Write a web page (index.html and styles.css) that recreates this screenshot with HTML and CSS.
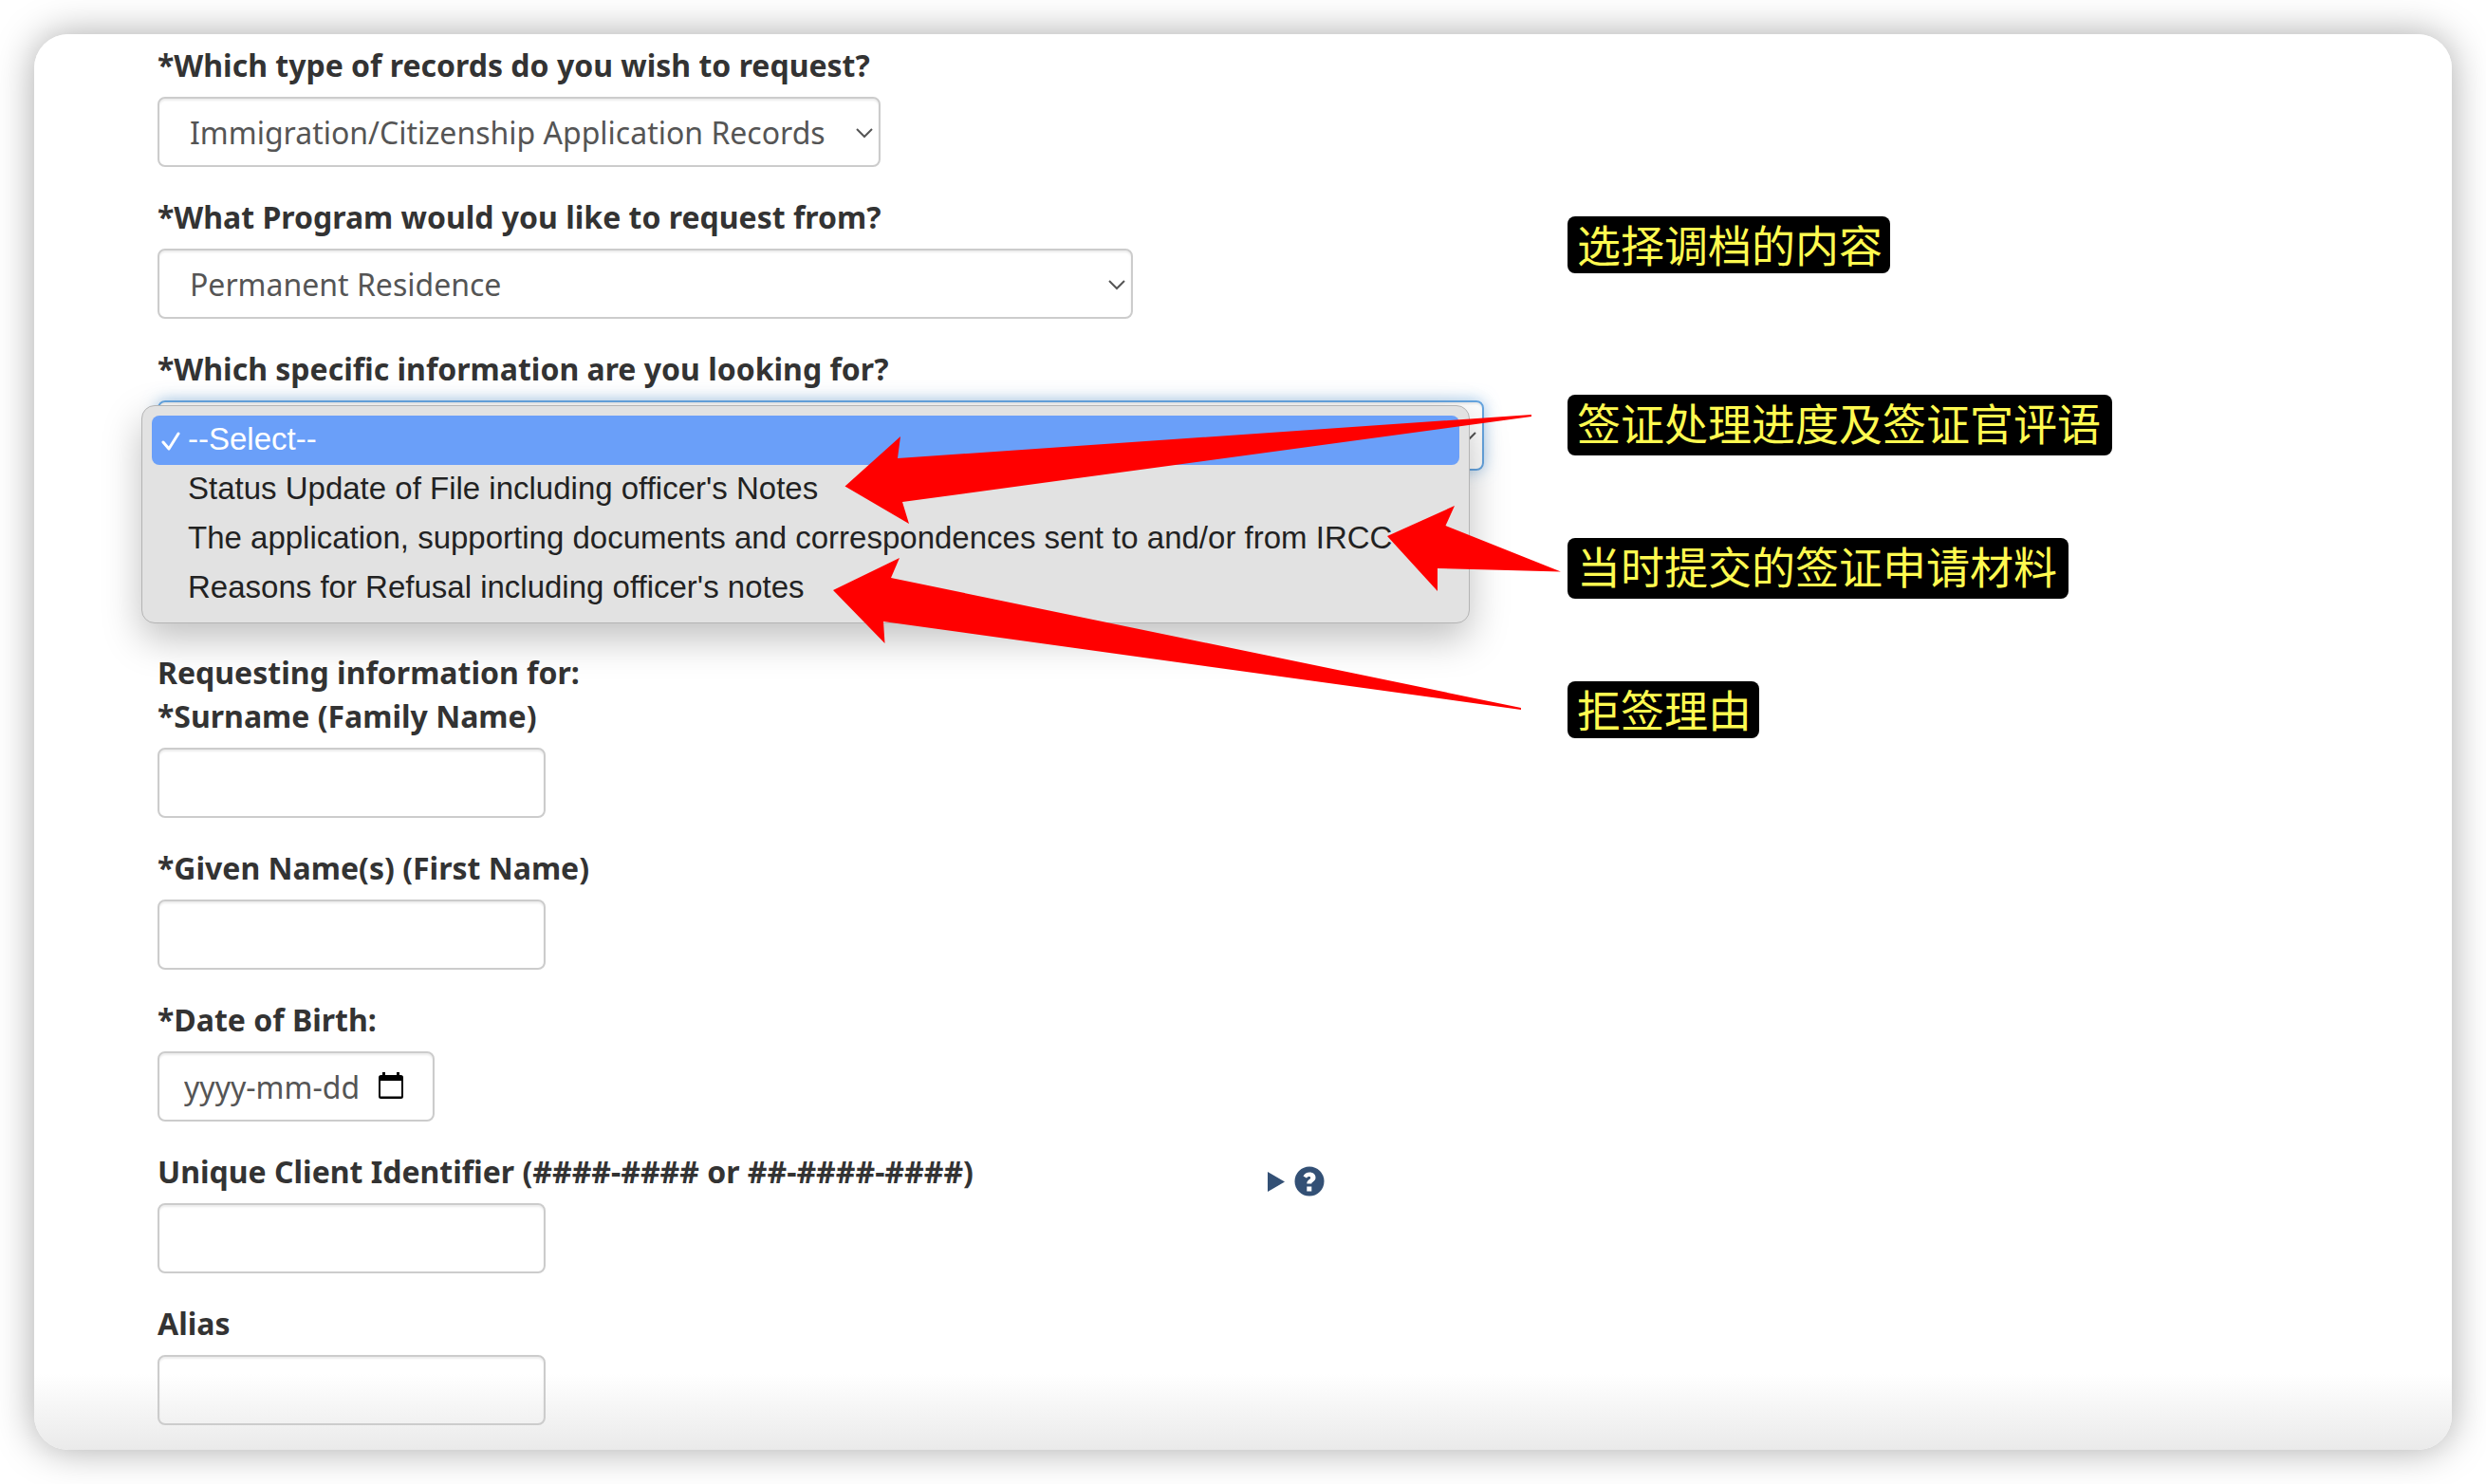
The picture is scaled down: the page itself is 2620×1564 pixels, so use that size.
FILE: index.html
```html
<!DOCTYPE html>
<html lang="en">
<head>
<meta charset="utf-8">
<title>Request for records</title>
<link rel="stylesheet" href="styles.css">
</head>
<body>
<main class="card">
  <form class="form">
    <div class="field">
      <label class="label" for="record-type">*Which type of records do you wish to request?</label>
      <div class="select-wrap select-wrap--records">
        <select class="control select" id="record-type"><option>Immigration/Citizenship Application Records</option></select>
        <svg class="chevron" viewBox="0 0 20 12" aria-hidden="true"><path d="M2 2l8 8 8-8"/></svg>
      </div>
    </div>
    <div class="field">
      <label class="label" for="program">*What Program would you like to request from?</label>
      <div class="select-wrap select-wrap--program">
        <select class="control select" id="program"><option>Permanent Residence</option></select>
        <svg class="chevron" viewBox="0 0 20 12" aria-hidden="true"><path d="M2 2l8 8 8-8"/></svg>
      </div>
    </div>
    <div class="field">
      <label class="label" for="information">*Which specific information are you looking for?</label>
      <div class="select-wrap select-wrap--information">
        <select class="control select select--open" id="information"><option></option></select>
        <svg class="chevron" viewBox="0 0 20 12" aria-hidden="true"><path d="M2 2l8 8 8-8"/></svg>
        <ul class="menu" role="listbox" aria-label="Specific information">
          <li class="menu-item menu-item--active" role="option" aria-selected="true">
            <svg class="check" viewBox="0 0 20 20" aria-hidden="true"><path d="M2 11l6 7L18 2"/></svg>--Select--</li>
          <li class="menu-item" role="option">Status Update of File including officer's Notes</li>
          <li class="menu-item" role="option">The application, supporting documents and correspondences sent to and/or from IRCC</li>
          <li class="menu-item" role="option">Reasons for Refusal including officer's notes</li>
        </ul>
      </div>
    </div>
    <fieldset class="person">
      <legend class="legend">Requesting information for:</legend>
      <div class="field">
        <label class="label" for="surname">*Surname (Family Name)</label>
        <input class="control text" id="surname" type="text">
      </div>
      <div class="field">
        <label class="label" for="given">*Given Name(s) (First Name)</label>
        <input class="control text" id="given" type="text">
      </div>
      <div class="field">
        <label class="label" for="birth">*Date of Birth:</label>
        <div class="date-wrap">
          <input class="control date" id="birth" type="text" placeholder="yyyy-mm-dd">
          <button class="calendar" type="button" aria-label="Open calendar">
            <svg viewBox="0 0 26 28" aria-hidden="true"><path fill-rule="evenodd" d="M4 0h3v3h12V0h3v3h1.500Q26 3 26 5.500V25.500Q26 28 23.500 28H2.500Q0 28 0 25.500V5.500Q0 3 2.500 3H4zM2 9v16.500h22V9z"/></svg>
          </button>
        </div>
      </div>
      <div class="field field--help">
        <div>
          <label class="label" for="uci">Unique Client Identifier (####-#### or ##-####-####)</label>
          <input class="control text" id="uci" type="text">
        </div>
        <details class="help">
          <summary class="help-toggle" aria-label="Help">
            <svg class="help-arrow" viewBox="0 0 18 22" aria-hidden="true"><path d="M0 1l18 10.500L0 22z"/></svg>
            <svg class="help-icon" viewBox="0 0 32 32" aria-hidden="true"><circle cx="16" cy="16" r="15.500"/><path class="help-mark" d="M9.500 10.500C11 7.800 13 6.500 16.200 6.500c3.600 0 6.300 2.200 6.300 5.400 0 4.300-4.200 4.300-4.200 6.600h-5c0-4.200 3.900-4.300 3.900-6.200 0-.9-.7-1.400-1.600-1.400-1.200 0-1.900.7-2.700 1.700zM13.300 21.500h5v5h-5z"/></svg>
          </summary>
        </details>
      </div>
      <div class="field">
        <label class="label" for="alias">Alias</label>
        <input class="control text" id="alias" type="text">
      </div>
    </fieldset>
  </form>
  <aside class="notes" lang="zh-CN">
    <p class="note note--title">选择调档的内容</p>
    <p class="note note--tall">签证处理进度及签证官评语</p>
    <p class="note note--tall">当时提交的签证申请材料</p>
    <p class="note">拒签理由</p>
  </aside>
  <svg class="arrows" viewBox="0 0 1640 740" aria-hidden="true">
    <path d="M854.500 476.500L913 424l-3 23 668-46v2L915 493l7 23z"/>
    <path d="M1426 529l71-32-9.500 21L1609 566.500 1479 563v24z"/>
    <path d="M842 586l70-34-9 21 664 137v2L895 619l1.500 23z"/>
  </svg>
</main>
</body>
</html>
```
FILE: styles.css
```css
* {
  box-sizing: border-box;
}

body {
  margin: 0;
  padding: 36px;
  background: #fff;
  color: #333;
  font-family: "Noto Sans", sans-serif;
  font-size: 32px;
  line-height: 46px;
}

.card {
  position: relative;
  display: grid;
  grid-template-columns: minmax(0, 1486px) minmax(0, 1fr);
  padding: 10px 36px 26px 130px;
  border-radius: 36px;
  background: linear-gradient(to top, #eaeaea, #fff 80px);
  box-shadow: 0 0 40px rgba(0, 0, 0, 0.34);
}

.form {
  display: flex;
  flex-direction: column;
  gap: 30px;
}

.label,
.legend {
  display: block;
  padding: 0;
  font-weight: 700;
}

.label {
  margin-bottom: 10px;
}

.control {
  display: block;
  width: 100%;
  height: 74px;
  border: 2px solid #ccc;
  border-radius: 8px;
  background: transparent;
  box-shadow: inset 0 2px 2px rgba(0, 0, 0, 0.075);
  color: #555;
  font: inherit;
  outline: none;
}

.select-wrap,
.date-wrap {
  position: relative;
}

.select-wrap--records {
  width: 762px;
}

.select-wrap--program {
  width: 1028px;
}

.select-wrap--information {
  width: 1398px;
}

.select {
  appearance: none;
  padding: 2px 32px 0;
}

.select--open {
  border-color: #66a5e0;
  box-shadow: inset 0 2px 2px rgba(0, 0, 0, 0.075), 0 0 16px rgba(102, 165, 224, 0.6);
}

.chevron {
  position: absolute;
  top: 32px;
  right: 7px;
  width: 20px;
  height: 12px;
  fill: none;
  stroke: #555;
  stroke-width: 2;
  pointer-events: none;
}

.menu {
  position: absolute;
  top: 5px;
  left: -17px;
  width: 1400px;
  margin: 0;
  padding: 10px;
  border: 1px solid #b4b4b4;
  border-radius: 14px;
  background: #e2e2e2;
  box-shadow: 0 16px 40px rgba(0, 0, 0, 0.25);
  color: #222;
  font-family: "Liberation Sans", sans-serif;
  font-size: 33px;
  line-height: 50px;
  list-style: none;
}

.menu-item {
  position: relative;
  padding: 0 0 2px 38px;
  border-radius: 8px;
  white-space: nowrap;
}

.menu-item--active {
  background: #6a9ff9;
  color: #fff;
}

.check {
  position: absolute;
  top: 17px;
  left: 10px;
  width: 20px;
  height: 20px;
  fill: none;
  stroke: #fff;
  stroke-width: 3;
  stroke-linecap: round;
  stroke-linejoin: round;
}

.person {
  display: flex;
  flex-direction: column;
  gap: 30px;
  min-width: 0;
  margin: 160px 0 0;
  padding: 0;
  border: 0;
}

.text {
  width: 409px;
}

.date-wrap {
  width: 292px;
}

.date {
  padding: 0 60px 0 26px;
}

.date::placeholder {
  color: #555;
  opacity: 1;
}

.calendar {
  position: absolute;
  top: 22px;
  right: 33px;
  width: 26px;
  height: 28px;
  padding: 0;
  border: 0;
  background: none;
}

.calendar svg {
  display: block;
}

.field--help {
  display: grid;
  grid-template-columns: 1170px auto;
}

.help-toggle {
  display: flex;
  align-items: center;
  gap: 10px;
  padding-top: 17px;
  list-style: none;
  fill: #335075;
}

.help-arrow {
  width: 18px;
  height: 22px;
}

.help-icon {
  width: 32px;
  height: 32px;
}

.help-mark {
  fill: #fff;
}

.notes {
  display: flex;
  flex-direction: column;
  align-items: flex-start;
  gap: 87px;
  padding-top: 182px;
}

.note {
  margin: 0;
  padding: 0 8px 4px 10px;
  border-radius: 8px;
  background: #000;
  color: #fffa50;
  font-family: "Noto Sans CJK SC", sans-serif;
  font-size: 46px;
  line-height: 56px;
  white-space: nowrap;
}

.note--title {
  margin-bottom: 41px;
}

.note--tall {
  padding-right: 12px;
  padding-bottom: 8px;
}

.arrows {
  position: absolute;
  top: 0;
  left: 0;
  width: 1640px;
  height: 740px;
  fill: #f00;
  pointer-events: none;
}
```
